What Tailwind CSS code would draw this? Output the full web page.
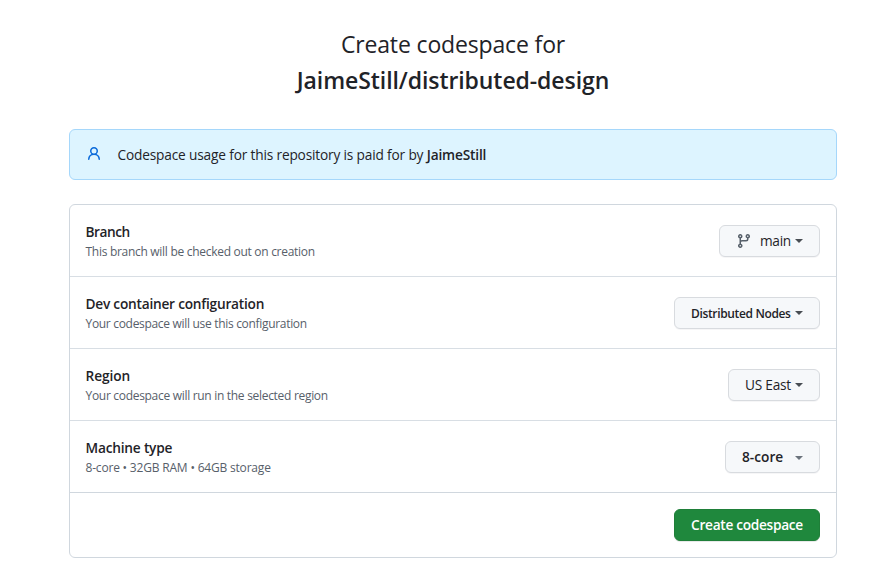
<!DOCTYPE html>
<html lang="en">
<head>
<meta charset="utf-8">
<title>Create codespace</title>
<script src="https://cdn.jsdelivr.net/npm/@tailwindcss/browser@4"></script>
</head>
<body class="bg-white font-['Open_Sans','Noto_Sans',sans-serif] text-[13.7px] tracking-[-0.16px] text-[#1f2328]">
<main class="ml-[69px] w-[768px] whitespace-nowrap pt-[26px]">
  <h1 class="text-center text-[23px] leading-9">
    <span class="block tracking-[-0.15px]">Create codespace for</span>
    <span class="block font-semibold tracking-[-0.08px]">JaimeStill/distributed-design</span>
  </h1>
  <section class="mt-[31px] flex h-[51px] items-center rounded-md border border-[#a5d7fb] bg-[#ddf4ff] pl-4">
    <svg class="mb-px size-4 shrink-0 fill-[#0969da]" viewBox="0 0 16 16"><path d="M10.561 8.073a6.005 6.005 0 0 1 3.432 5.142.75.75 0 1 1-1.498.07 4.5 4.5 0 0 0-8.99 0 .75.75 0 0 1-1.498-.07 6.004 6.004 0 0 1 3.431-5.142 3.999 3.999 0 1 1 5.123 0ZM10.5 5a2.5 2.5 0 1 0-5 0 2.5 2.5 0 0 0 5 0Z"/></svg>
    <p class="ml-[15.5px] pt-0.5 tracking-[-0.17px]">Codespace usage for this repository is paid for by <b class="font-semibold">JaimeStill</b></p>
  </section>
  <section class="mt-6 rounded-md border border-[#d0d7de]">
    <div class="flex h-[72px] items-center justify-between border-b border-[#d8dee4] pl-[15.5px] pr-4">
      <div class="pt-px"><h2 class="font-semibold leading-[21px] tracking-[-0.45px]">Branch</h2><p class="text-xs leading-[19px] tracking-[-0.29px] text-[#57606a]">This branch will be checked out on creation</p></div>
      <button class="flex h-8 w-[101px] items-center rounded-md border border-[#d8dbdf] bg-[#f6f8fa] pl-4 shadow-[0_1px_0_rgba(31,35,40,0.04)]"><svg class="mt-px size-4 shrink-0 fill-[#57606a]" viewBox="0 0 16 16"><path d="M9.5 3.25a2.25 2.25 0 1 1 3 2.122V6A2.5 2.5 0 0 1 10 8.5H6a1 1 0 0 0-1 1v1.128a2.251 2.251 0 1 1-1.5 0V5.372a2.25 2.25 0 1 1 1.5 0v1.836A2.493 2.493 0 0 1 6 7h4a1 1 0 0 0 1-1v-.628A2.25 2.25 0 0 1 9.5 3.25Zm-6 0a.75.75 0 1 0 1.5 0 .75.75 0 0 0-1.5 0Zm8.25-.75a.75.75 0 1 0 0 1.5.75.75 0 0 0 0-1.5ZM4.25 12a.75.75 0 1 0 0 1.5.75.75 0 0 0 0-1.5Z"/></svg><span class="ml-2 w-[35px] pt-0.5 text-left tracking-[-0.3px]">main</span><i class="border-x-4 border-t-4 border-x-transparent border-t-[#484d53]"></i></button>
    </div>
    <div class="flex h-[72px] items-center justify-between border-b border-[#d8dee4] pl-[15.5px] pr-4">
      <div class="pt-px"><h2 class="font-semibold leading-[21px] tracking-[-0.23px]">Dev container configuration</h2><p class="text-xs leading-[19px] tracking-[-0.31px] text-[#57606a]">Your codespace will use this configuration</p></div>
      <button class="flex h-8 w-[146px] items-center rounded-md border border-[#d8dbdf] bg-[#f6f8fa] pl-4 shadow-[0_1px_0_rgba(31,35,40,0.04)]"><span class="w-[104px] pt-0.5 text-left text-xs font-semibold tracking-[-0.35px]">Distributed Nodes</span><i class="border-x-4 border-t-4 border-x-transparent border-t-[#484d53]"></i></button>
    </div>
    <div class="flex h-[72px] items-center justify-between border-b border-[#d8dee4] pl-[15.5px] pr-4">
      <div class="pt-px"><h2 class="font-semibold leading-[21px] tracking-[-0.1px]">Region</h2><p class="text-xs leading-[19px] tracking-[-0.3px] text-[#57606a]">Your codespace will run in the selected region</p></div>
      <button class="flex h-8 w-[92px] items-center rounded-md border border-[#d8dbdf] bg-[#f6f8fa] pl-4 shadow-[0_1px_0_rgba(31,35,40,0.04)]"><span class="w-[50px] pt-0.5 text-left tracking-[-0.25px]">US East</span><i class="border-x-4 border-t-4 border-x-transparent border-t-[#484d53]"></i></button>
    </div>
    <div class="flex h-[72px] items-center justify-between border-b border-[#d0d7de] pl-[15.5px] pr-4">
      <div class="pt-px"><h2 class="font-semibold leading-[21px] tracking-[-0.2px]">Machine type</h2><p class="text-xs leading-[19px] tracking-[-0.19px] text-[#57606a]">8-core • 32GB RAM • 64GB storage</p></div>
      <button class="flex h-8 w-[95px] items-center rounded-md border border-[#d8dbdf] bg-[#f6f8fa] pl-4 shadow-[0_1px_0_rgba(31,35,40,0.04)]"><span class="w-[53px] pt-0.5 text-left font-semibold tracking-[0px]">8-core</span><i class="mt-[3px] border-x-4 border-t-4 border-x-transparent border-t-[#6b737c]"></i></button>
    </div>
    <div class="flex h-16 items-center justify-end px-4">
      <button class="h-8 w-[146px] rounded-md border border-[#1f7f39] bg-[#1f883d] pt-px font-semibold tracking-[-0.3px] text-white shadow-[0_1px_0_rgba(31,35,40,0.1)]">Create codespace</button>
    </div>
  </section>
</main>
</body>
</html>
